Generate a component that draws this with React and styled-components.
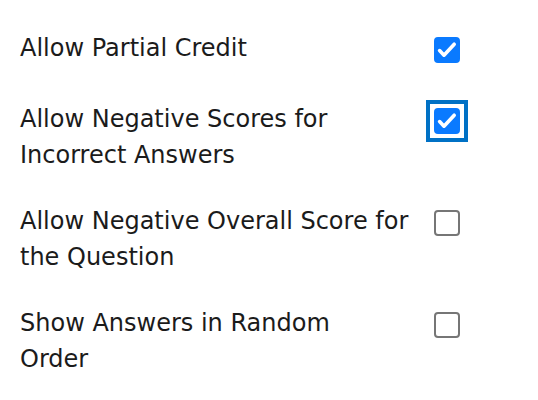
import React, { useState } from "react";
import styled, { createGlobalStyle } from "styled-components";

const GlobalStyle = createGlobalStyle`
  body {
    margin: 0;
    background: #ffffff;
    font-family: "DejaVu Sans", "Liberation Sans", sans-serif;
    color: #1b1b1b;
  }
`;

const options = [
  { id: "partial", lines: ["Allow Partial Credit"], checked: true },
  { id: "negative", lines: ["Allow Negative Scores for", "Incorrect Answers"], checked: true, focused: true },
  { id: "overall", lines: ["Allow Negative Overall Score for", "the Question"], checked: false },
  { id: "random", lines: ["Show Answers in Random", "Order"], checked: false },
];

function App() {
  const [values, setValues] = useState(options);

  const toggleHandler = (id) => {
    setValues(values.map((o) => (o.id === id ? { ...o, checked: !o.checked } : o)));
  };

  return (
    <Container>
      <GlobalStyle />
      {values.map((o) => (
        <Row key={o.id}>
          <Label htmlFor={o.id}>
            {o.lines.map((line) => (
              <Line key={line}>{line}</Line>
            ))}
          </Label>
          <Control $focused={o.focused}>
            <Box
              id={o.id}
              role="checkbox"
              aria-checked={o.checked}
              $checked={o.checked}
              onClick={() => toggleHandler(o.id)}
            >
              {o.checked && (
                <svg width="22" height="22" viewBox="0 0 22 22">
                  <path
                    d="M3.6 11.6 L8 16.2 L18.2 5.2"
                    fill="none"
                    stroke="#fff"
                    strokeWidth="3.6"
                    strokeLinecap="round"
                    strokeLinejoin="round"
                  />
                </svg>
              )}
            </Box>
          </Control>
        </Row>
      ))}
    </Container>
  );
}

export default App;

const Container = styled.div`
  display: flex;
  flex-direction: column;
  gap: 30px;
  padding: 30px 20px 0 20px;
`;

const Row = styled.div`
  display: flex;
  align-items: flex-start;
`;

const Label = styled.label`
  width: 406px;
  font-size: 24px;
  line-height: 36px;
`;

const Line = styled.span`
  display: block;
  white-space: nowrap;
`;

const Control = styled.div`
  box-sizing: border-box;
  width: 42px;
  height: 42px;
  margin-top: -1px;
  padding: 4px;
  border: 4px solid ${(p) => (p.$focused ? "#0071c5" : "transparent")};
  display: flex;
  align-items: center;
  justify-content: center;
`;

const Box = styled.div`
  box-sizing: border-box;
  flex: none;
  width: 26px;
  height: 26px;
  border-radius: 4px;
  border: 2px solid ${(p) => (p.$checked ? "#0a7aff" : "#767676")};
  background: ${(p) => (p.$checked ? "#0a7aff" : "#fff")};
  display: flex;
  align-items: center;
  justify-content: center;
  cursor: pointer;
`;
